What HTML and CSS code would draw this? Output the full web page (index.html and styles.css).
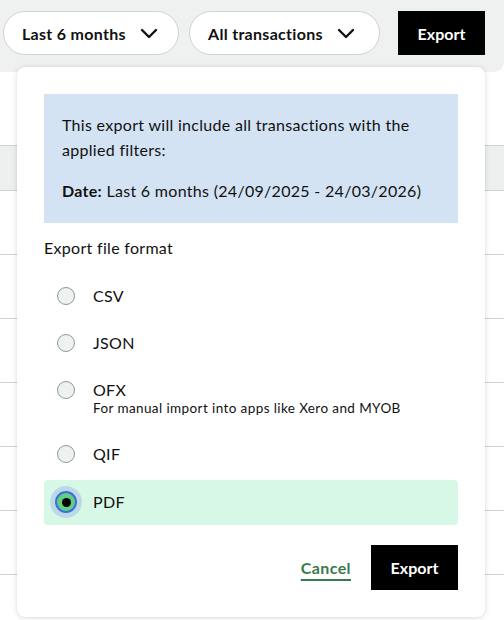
FILE: index.html
```html
<!DOCTYPE html>
<html lang="en">
<head>
<meta charset="utf-8">
<title>Export</title>
<link rel="stylesheet" href="styles.css">
</head>
<body>
<div class="page">
  <div class="toolbar">
    <button class="pill">Last 6 months
      <svg class="chev" width="18" height="11" viewBox="0 0 18 11"><path d="M2 2 L9 9 L16 2" fill="none" stroke="#111" stroke-width="2.4" stroke-linecap="round" stroke-linejoin="round"/></svg>
    </button>
    <button class="pill">All transactions
      <svg class="chev" width="18" height="11" viewBox="0 0 18 11"><path d="M2 2 L9 9 L16 2" fill="none" stroke="#111" stroke-width="2.4" stroke-linecap="round" stroke-linejoin="round"/></svg>
    </button>
    <button class="btn-black top-export">Export</button>
  </div>
  <div class="table">
    <div class="thead"></div>
    <div class="trow"></div>
    <div class="trow"></div>
    <div class="trow"></div>
    <div class="trow"></div>
    <div class="trow"></div>
    <div class="trow"></div>
    <div class="trow"></div>
  </div>

  <div class="popup">
    <div class="info">
      <p class="info-line">This export will include all transactions with the applied filters:</p>
      <p class="info-line info-date"><strong>Date:</strong> Last 6 months (24/09/2025 - 24/03/2026)</p>
    </div>
    <div class="format-title">Export file format</div>
    <div class="options">
      <label class="opt"><span class="radio"></span><span class="opt-text"><span class="opt-label">CSV</span></span></label>
      <label class="opt"><span class="radio"></span><span class="opt-text"><span class="opt-label">JSON</span></span></label>
      <label class="opt"><span class="radio"></span><span class="opt-text"><span class="opt-label">OFX</span><span class="opt-sub">For manual import into apps like Xero and MYOB</span></span></label>
      <label class="opt"><span class="radio"></span><span class="opt-text"><span class="opt-label">QIF</span></span></label>
      <label class="opt opt-selected"><span class="radio radio-on"><span class="dot"></span></span><span class="opt-text"><span class="opt-label">PDF</span></span></label>
    </div>
    <div class="footer">
      <a class="cancel">Cancel</a>
      <button class="btn-black foot-export">Export</button>
    </div>
  </div>
</div>
</body>
</html>
```
FILE: styles.css
```css
* { box-sizing: border-box; }
html, body { margin: 0; padding: 0; background: #fff; }
body { font-family: Lato, "Open Sans", sans-serif; color: #111; width: 504px; height: 620px; overflow: hidden; }
.page { position: relative; width: 504px; height: 620px; }

.toolbar {
  height: 72px;
  background: #eff1f1;
  border-bottom-right-radius: 10px;
  display: flex;
  align-items: flex-start;
  padding: 11px 19px 0 3px;
  gap: 10px;
}
.pill {
  height: 44px;
  border: 1px solid #cfd3d2;
  background: #fff;
  border-radius: 22px;
  padding: 0 18px 0 18px;
  display: flex;
  align-items: center;
  gap: 14px;
  font-family: Lato, sans-serif;
  font-weight: 700;
  font-size: 16px;
  letter-spacing: 0.3px;
  color: #111;
}
.pill:first-child { width: 176px; }
.pill:nth-child(2) { width: 191px; }
.chev { display: block; }
.btn-black {
  background: #000;
  color: #fff;
  border: 0;
  border-radius: 0;
  font-family: Lato, sans-serif;
  font-weight: 700;
  font-size: 16px;
  height: 44px;
  width: 87px;
}
.top-export { margin-left: 8px; }

.table { margin-top: 73px; }
.thead { height: 46px; background: #eef0f0; border-top: 1px solid #cfd1d1; border-bottom: 1px solid #cfd1d1; }
.trow { height: 64px; border-bottom: 1px solid #cfd1d1; }

.popup {
  position: absolute;
  left: 17px;
  top: 67px;
  width: 468px;
  height: 550px;
  background: #fff;
  border-radius: 8px;
  box-shadow: 0 1px 6px rgba(0,0,0,0.12), 0 0 2px rgba(0,0,0,0.08);
  padding: 27px 27px 27px 27px;
  display: flex;
  flex-direction: column;
  letter-spacing: 0.3px;
}
.info {
  background: #d4e3f4;
  padding: 18px 18px 20px 18px;
  font-size: 16px;
  line-height: 25px;
  color: #111;
}
.info-line { margin: 0; }
.info-date { margin-top: 16px; }
.info strong { font-weight: 700; }

.format-title { margin-top: 15px; font-size: 16px; line-height: 20px; }

.options { margin-top: 16px; display: flex; flex-direction: column; gap: 3px; }
.opt {
  display: flex;
  align-items: flex-start;
  gap: 18px;
  padding: 12px 13px;
  min-height: 44px;
  border-radius: 4px;
}
.opt-selected { background: #d8f8e7; margin-top: 1px; }
.radio {
  width: 18px;
  height: 18px;
  border-radius: 50%;
  border: 1px solid #8d9c97;
  background: #eef1f0;
  margin-top: 1px;
  flex: none;
  display: flex;
  align-items: center;
  justify-content: center;
}
.radio-on {
  width: 22px;
  height: 22px;
  margin: -1px -2px 0 -2px;
  border: 2px solid #3f6fd8;
  background: #5fcf80;
  box-shadow: 0 0 0 5px #bcd9e9;
}
.dot { width: 9px; height: 9px; border-radius: 50%; background: #000; }
.opt-text { display: flex; flex-direction: column; }
.opt-label { font-size: 16px; line-height: 20px; }
.opt-sub { font-size: 13.5px; line-height: 17px; letter-spacing: 0.4px; color: #111; }

.footer {
  margin-top: auto;
  display: flex;
  justify-content: flex-end;
  align-items: center;
  gap: 20px;
}
.cancel {
  color: #3a7a4c;
  font-weight: 700;
  font-size: 16px;
  letter-spacing: 0.4px;
  text-decoration: underline;
  text-decoration-thickness: 2px;
  text-underline-offset: 5px;
}
.foot-export { height: 45px; }
```
